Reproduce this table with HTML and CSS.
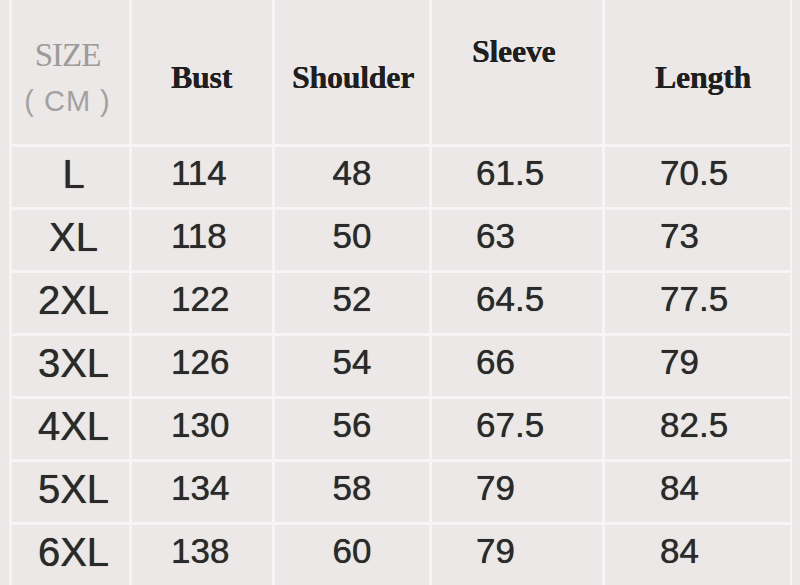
FILE: index.html
```html
<!DOCTYPE html>
<html>
<head>
<meta charset="utf-8">
<link rel="stylesheet" href="styles.css">
</head>
<body>
<div class="chart">
  <div class="cell head size-head"><span class="size-word">SIZE</span><span class="cm">( CM )</span></div>
  <div class="cell head c2">Bust</div>
  <div class="cell head c3">Shoulder</div>
  <div class="cell head c4 sleeve">Sleeve</div>
  <div class="cell head c5">Length</div>

  <div class="cell sz">L</div><div class="cell num c2">114</div><div class="cell num c3">48</div><div class="cell num c4">61.5</div><div class="cell num c5">70.5</div>
  <div class="cell sz">XL</div><div class="cell num c2">118</div><div class="cell num c3">50</div><div class="cell num c4">63</div><div class="cell num c5">73</div>
  <div class="cell sz">2XL</div><div class="cell num c2">122</div><div class="cell num c3">52</div><div class="cell num c4">64.5</div><div class="cell num c5">77.5</div>
  <div class="cell sz">3XL</div><div class="cell num c2">126</div><div class="cell num c3">54</div><div class="cell num c4">66</div><div class="cell num c5">79</div>
  <div class="cell sz">4XL</div><div class="cell num c2">130</div><div class="cell num c3">56</div><div class="cell num c4">67.5</div><div class="cell num c5">82.5</div>
  <div class="cell sz">5XL</div><div class="cell num c2">134</div><div class="cell num c3">58</div><div class="cell num c4">79</div><div class="cell num c5">84</div>
  <div class="cell sz">6XL</div><div class="cell num c2">138</div><div class="cell num c3">60</div><div class="cell num c4">79</div><div class="cell num c5">84</div>
</div>
</body>
</html>
```
FILE: styles.css
```css
html, body {
  margin: 0;
  padding: 0;
  background: #ece8e8;
  width: 800px;
  height: 585px;
  overflow: hidden;
}

.chart {
  display: grid;
  grid-template-columns: 117px 140px 154px 170px 185px;
  grid-template-rows: 144px repeat(7, 60px);
  column-gap: 3px;
  row-gap: 3px;
  background: #f6f4f4;
  margin-left: 9px;
  padding: 0 3px;
  width: 783px;
  height: 585px;
  box-sizing: border-box;
}

.cell {
  background: #ece8e8;
  display: flex;
  align-items: center;
  color: #2a2a2a;
}

.head {
  font-family: "Liberation Serif", "Times New Roman", serif;
  font-weight: bold;
  font-size: 32px;
  color: #1f1f1f;
  letter-spacing: -0.3px;
  padding-top: 10px;
  box-sizing: border-box;
  text-shadow: 0 0 0.6px #1f1f1f;
}

.size-head {
  flex-direction: column;
  justify-content: center;
  align-items: center;
  padding: 14px 6px 0 0;
  text-shadow: none;
}

.size-word {
  font-family: "Liberation Serif", "Times New Roman", serif;
  font-weight: normal;
  font-size: 33px;
  color: #9c9a9a;
  letter-spacing: -1px;
  line-height: 44px;
}

.cm {
  font-family: "Liberation Sans", Arial, sans-serif;
  font-weight: normal;
  font-size: 29px;
  color: #a3a1a1;
  letter-spacing: 1px;
  line-height: 48px;
}

.sleeve {
  padding-top: 0;
  padding-bottom: 42px;
}

.num, .sz {
  font-family: "Liberation Sans", Arial, sans-serif;
  font-size: 35px;
  padding-bottom: 8px;
  box-sizing: border-box;
  text-shadow: 0 0 0.7px #2a2a2a;
}

.sz {
  font-size: 40px;
  justify-content: center;
  padding-left: 6px;
  padding-bottom: 6px;
}

.c2 { padding-left: 39px; }
.c3 { justify-content: center; }
.head.c3 { padding-left: 2px; }
.c4 { padding-left: 44px; }
.c5 { padding-left: 55px; }
.head.c4 { padding-left: 40px; }
.head.c5 { padding-left: 50px; }
```
